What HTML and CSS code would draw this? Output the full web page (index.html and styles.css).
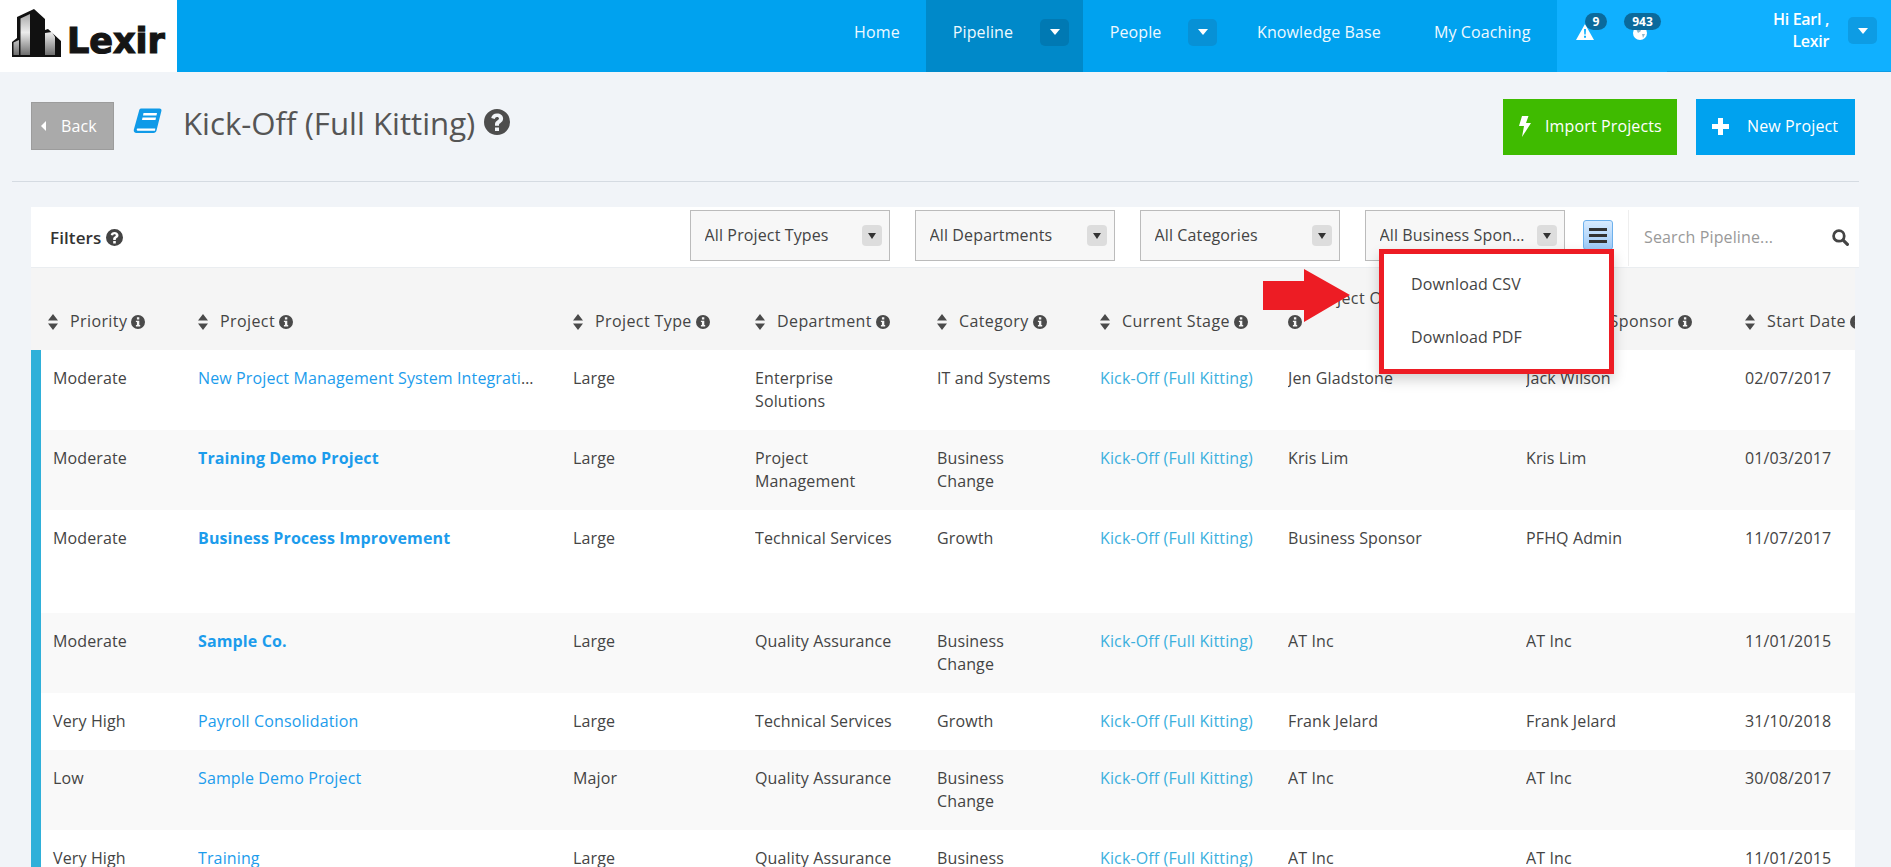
FILE: index.html
```html
<!DOCTYPE html>
<html lang="en">
<head>
<meta charset="utf-8">
<title>Kick-Off (Full Kitting)</title>
<link rel="stylesheet" href="styles.css">
</head>
<body>
<svg class="defs" width="0" height="0" aria-hidden="true">
  <symbol id="i-sort" viewBox="0 0 10 16"><path d="M5 0 10 6.500H0ZM0 9.500H10L5 16Z"/></symbol>
  <symbol id="i-info" viewBox="0 0 14 14"><path fill-rule="evenodd" d="M7 0a7 7 0 1 1 0 14A7 7 0 0 1 7 0ZM5.900 2.300V4.500H8.300V2.300ZM4.900 5.700V7H5.900V10H4.900V11.500H9.200V10H8.300V5.700Z"/></symbol>
  <symbol id="i-help" viewBox="0 0 26 26"><path fill-rule="evenodd" d="M13 0a13 13 0 1 1 0 26A13 13 0 0 1 13 0ZM11 18.500V22H15V18.500ZM13 4.500C9.700 4.500 7.700 6.300 7.200 9L10.800 9.900C11.100 8.600 11.800 7.900 13 7.900 14.200 7.900 15 8.500 15 9.500 15 10.400 14.300 10.900 13.300 11.600 12 12.500 11 13.400 11 15.200V16.800H15V15.700C15 14.900 15.600 14.500 16.500 13.900 17.900 12.900 19.100 11.800 19.100 9.500 19.100 6.500 16.500 4.500 13 4.500Z"/></symbol>
</svg>

<header class="topbar">
  <a class="logo">
    <svg class="logo-mark" viewBox="0 0 50 49" width="50" height="49" aria-hidden="true">
      <defs>
        <linearGradient id="glass" x1="0" y1="0" x2="0" y2="1"><stop offset="0" stop-color="#a8a8a8"/><stop offset=".45" stop-color="#ececec"/><stop offset="1" stop-color="#6e6e6e"/></linearGradient>
      </defs>
      <path fill="#111" d="M0 48V33L5 29V8L22 0 33 10V21L36 20 49 32V48Z"/>
      <path fill="url(#glass)" d="M1.500 46V33.500L7 31V46ZM8.500 46V9.500L18 5V46ZM33 46V24L40 23 43 28V46Z"/>
    </svg>
    <span class="logo-text">Lexir</span>
  </a>
  <nav class="nav">
    <a class="nav-item">Home</a>
    <a class="nav-item nav-item-open">Pipeline<span class="caret-box caret-dark"><i class="caret"></i></span></a>
    <a class="nav-item nav-item-drop">People<span class="caret-box"><i class="caret"></i></span></a>
    <a class="nav-item">Knowledge Base</a>
    <a class="nav-item">My Coaching</a>
  </nav>
  <div class="usernav">
    <div class="notice notice-alert">
      <svg width="18" height="16" viewBox="0 0 18 16" aria-hidden="true"><path fill="#fff" fill-rule="evenodd" d="M9 0 18 16H0ZM8 5 8.300 10.500H9.700L10 5ZM8 11.700V13.700H10V11.700Z"/></svg>
      <span class="badge badge-one">9</span>
    </div>
    <div class="notice notice-globe">
      <svg width="14" height="14" viewBox="0 0 14 14" aria-hidden="true"><circle cx="7" cy="7" r="7" fill="#fff"/><path fill="#8fb7cc" d="M3 3 7 2 8 5 5 7ZM9 8 12 8 10 12Z"/></svg>
      <span class="badge badge-many">943</span>
    </div>
    <div class="hello">Hi Earl ,<br>Lexir</div>
    <span class="caret-box caret-user"><i class="caret"></i></span>
  </div>
</header>

<main>
  <section class="titlebar">
    <a class="back"><i class="back-arrow"></i>Back</a>
    <svg class="book" width="29" height="27" viewBox="0 0 29 27" aria-hidden="true">
      <path fill="#0f9ae8" d="M8 .5H26.500C28 .5 28.800 1.500 28.400 3L23.500 22.500C23.200 24 22 25 20.500 25H3.500C1.500 25 .4 23.500 .8 21.700L6 3C6.300 1.500 6.800.5 8 .5Z"/>
      <path fill="#fff" d="M10.500 5H24L23.500 7.500H10ZM9.500 9.500H23L22.500 12H9ZM4.500 20.500H22.300L22 22.700H4.500C3.500 22.700 3.500 20.500 4.500 20.500Z"/>
    </svg>
    <h1 class="page-title">Kick-Off (Full Kitting)</h1>
    <svg class="title-help"><use href="#i-help"/></svg>
    <div class="actions">
      <a class="action action-import">
        <svg width="12" height="21" viewBox="0 0 12 21" aria-hidden="true"><path fill="#fff" d="M3 0H9.500L7 7H12L3 21 5 10H0Z"/></svg>
        Import Projects
      </a>
      <a class="action action-new">
        <svg width="17" height="17" viewBox="0 0 17 17" aria-hidden="true"><path fill="#fff" d="M6 0H11V6H17V11H11V17H6V11H0V6H6Z"/></svg>
        New Project
      </a>
    </div>
  </section>

  <section class="panel">
    <div class="filters">
      <span class="filters-label">Filters</span>
      <svg class="filters-help"><use href="#i-help"/></svg>
      <div class="selects">
        <div class="select"><span class="select-text">All Project Types</span><span class="select-caret"></span></div>
        <div class="select"><span class="select-text">All Departments</span><span class="select-caret"></span></div>
        <div class="select"><span class="select-text">All Categories</span><span class="select-caret"></span></div>
        <div class="select"><span class="select-text">All Business Sponsors</span><span class="select-caret"></span></div>
      </div>
      <button class="menu-btn" aria-label="Export menu"><i></i><i></i><i></i></button>
      <div class="search">
        <span class="search-text">Search Pipeline...</span>
        <svg width="17" height="17" viewBox="0 0 16 16" aria-hidden="true"><circle cx="6.500" cy="6.500" r="5" fill="none" stroke="#444" stroke-width="2.600"/><path d="M10.500 10.500 14.500 14.500" stroke="#444" stroke-width="3" stroke-linecap="round"/></svg>
      </div>
    </div>

    <div class="table-wrap">
      <table class="grid">
        <colgroup>
          <col class="c-bar"><col class="c-priority"><col class="c-project"><col class="c-type"><col class="c-dept"><col class="c-cat"><col class="c-stage"><col class="c-owner"><col class="c-sponsor"><col class="c-start">
        </colgroup>
        <thead>
          <tr>
            <th></th>
            <th class="first"><svg class="sort"><use href="#i-sort"/></svg>Priority<svg class="info"><use href="#i-info"/></svg></th>
            <th><svg class="sort"><use href="#i-sort"/></svg>Project<svg class="info"><use href="#i-info"/></svg></th>
            <th><svg class="sort"><use href="#i-sort"/></svg>Project Type<svg class="info"><use href="#i-info"/></svg></th>
            <th><svg class="sort"><use href="#i-sort"/></svg>Department<svg class="info"><use href="#i-info"/></svg></th>
            <th><svg class="sort"><use href="#i-sort"/></svg>Category<svg class="info"><use href="#i-info"/></svg></th>
            <th><svg class="sort"><use href="#i-sort"/></svg>Current Stage<svg class="info"><use href="#i-info"/></svg></th>
            <th><svg class="sort"><use href="#i-sort"/></svg>Project Owner<br><svg class="info info-wrapped"><use href="#i-info"/></svg></th>
            <th><svg class="sort sort-tight"><use href="#i-sort"/></svg>Business Sponsor<svg class="info"><use href="#i-info"/></svg></th>
            <th><svg class="sort"><use href="#i-sort"/></svg>Start Date<svg class="info"><use href="#i-info"/></svg></th>
          </tr>
        </thead>
        <tbody>
          <tr>
            <td class="bar"></td><td class="first">Moderate</td><td class="name"><a class="link">New Project Management System Integration</a></td><td>Large</td><td>Enterprise<br>Solutions</td><td>IT and Systems</td><td><a class="stage">Kick-Off (Full Kitting)</a></td><td>Jen Gladstone</td><td>Jack Wilson</td><td>02/07/2017</td>
          </tr>
          <tr>
            <td class="bar"></td><td class="first">Moderate</td><td class="name"><a class="link link-strong">Training Demo Project</a></td><td>Large</td><td>Project<br>Management</td><td>Business<br>Change</td><td><a class="stage">Kick-Off (Full Kitting)</a></td><td>Kris Lim</td><td>Kris Lim</td><td>01/03/2017</td>
          </tr>
          <tr class="tall">
            <td class="bar"></td><td class="first">Moderate</td><td class="name"><a class="link link-strong">Business Process Improvement</a></td><td>Large</td><td>Technical Services</td><td>Growth</td><td><a class="stage">Kick-Off (Full Kitting)</a></td><td>Business Sponsor</td><td>PFHQ Admin</td><td>11/07/2017</td>
          </tr>
          <tr>
            <td class="bar"></td><td class="first">Moderate</td><td class="name"><a class="link link-strong">Sample Co.</a></td><td>Large</td><td>Quality Assurance</td><td>Business<br>Change</td><td><a class="stage">Kick-Off (Full Kitting)</a></td><td>AT Inc</td><td>AT Inc</td><td>11/01/2015</td>
          </tr>
          <tr>
            <td class="bar"></td><td class="first">Very High</td><td class="name"><a class="link">Payroll Consolidation</a></td><td>Large</td><td>Technical Services</td><td>Growth</td><td><a class="stage">Kick-Off (Full Kitting)</a></td><td>Frank Jelard</td><td>Frank Jelard</td><td>31/10/2018</td>
          </tr>
          <tr>
            <td class="bar"></td><td class="first">Low</td><td class="name"><a class="link">Sample Demo Project</a></td><td>Major</td><td>Quality Assurance</td><td>Business<br>Change</td><td><a class="stage">Kick-Off (Full Kitting)</a></td><td>AT Inc</td><td>AT Inc</td><td>30/08/2017</td>
          </tr>
          <tr>
            <td class="bar"></td><td class="first">Very High</td><td class="name"><a class="link">Training</a></td><td>Large</td><td>Quality Assurance</td><td>Business<br>Change</td><td><a class="stage">Kick-Off (Full Kitting)</a></td><td>AT Inc</td><td>AT Inc</td><td>11/01/2015</td>
          </tr>
        </tbody>
      </table>
    </div>

    <div class="export-menu">
      <a class="export-item">Download CSV</a>
      <a class="export-item">Download PDF</a>
    </div>
    <svg class="callout-arrow" width="87" height="53" viewBox="0 0 87 53" aria-hidden="true"><path fill="#ed1c24" d="M0 12H41V0L87 26 41 53V41H0Z"/></svg>
  </section>
</main>
</body>
</html>
```

FILE: styles.css
```css
* { box-sizing: border-box; }
html, body { height: 867px; overflow: hidden; }
body {
  margin: 0;
  background: #f1f4f8;
  color: #444;
  font-family: "Open Sans", "Liberation Sans", sans-serif;
  font-size: 16px;
  line-height: 23px;
  letter-spacing: .13px;
}
a { color: inherit; text-decoration: none; }
.defs { position: absolute; }

/* top bar */
.topbar { display: flex; height: 72px; background: #00a2ef; }
.logo {
  display: flex;
  align-items: flex-end;
  width: 177px;
  padding: 0 0 15px 12px;
  background: #fff;
}
.logo-mark { display: block; flex: none; margin-bottom: -1px; }
.logo-text {
  margin-left: 5px;
  color: #151515;
  font-family: "DejaVu Sans", sans-serif;
  font-size: 35px;
  font-weight: 700;
  line-height: 32px;
  letter-spacing: 0;
  -webkit-text-stroke: 1.2px #151515;
}
.nav { display: flex; margin-left: auto; color: #eef9ff; }
.nav-item { display: flex; align-items: center; gap: 27px; padding: 0 26.5px 8px; white-space: nowrap; }
.nav-item-open { padding-right: 14px; background: #0089c9; }
.nav-item-drop { padding-right: 13px; }
.caret-box {
  display: flex;
  flex: none;
  align-items: center;
  justify-content: center;
  width: 29px;
  height: 27px;
  border-radius: 5px;
  background: #0791d6;
}
.caret-dark { background: #0079b3; }
.caret { border-top: 6px solid #fff; border-left: 5px solid transparent; border-right: 5px solid transparent; }
.usernav {
  position: relative;
  display: flex;
  flex: none;
  align-items: center;
  width: 334px;
  padding: 0 14px 8px 0;
  background: #10b0ff;
  color: #fff;
}
.usernav::after { content: ""; position: absolute; left: 110px; right: 0; bottom: 0; height: 1px; background: #0d9ce4; }
.notice { position: relative; display: flex; }
.notice-alert { margin-left: 19px; }
.notice-globe { margin: 1px 0 0 39px; }
.badge {
  position: absolute;
  height: 17px;
  border-radius: 9px;
  background: #0a6a9c;
  color: #fff;
  font-size: 12px;
  font-weight: 700;
  line-height: 17px;
  letter-spacing: 0;
  text-align: center;
}
.badge-one { top: -11px; left: 9px; width: 22px; }
.badge-many { top: -13px; left: -9px; width: 37px; }
.hello { margin: -4px 19px 0 auto; font-weight: 600; line-height: 22px; letter-spacing: -.3px; text-align: right; }
.caret-user { margin-top: -3px; background: #0d9ce4; }

/* title row */
.titlebar {
  display: flex;
  align-items: flex-start;
  height: 110px;
  margin: 0 32px 0 12px;
  padding: 27px 4px 0 19px;
  border-bottom: 1px solid #d5dbe2;
}
.back {
  display: flex;
  align-items: center;
  width: 83px;
  height: 48px;
  margin-top: 3px;
  padding-left: 9px;
  border: 1px solid #9c9c9c;
  background: #aaa;
  color: #fff;
}
.back-arrow { margin-right: 15px; border-top: 5px solid transparent; border-bottom: 5px solid transparent; border-right: 5px solid #fff; }
.book { flex: none; margin: 9px 21px 0 19px; }
.page-title { margin: 0; padding-top: 2px; color: #555; font-size: 31.2px; font-weight: 400; line-height: 44px; letter-spacing: 0; white-space: nowrap; }
.title-help { flex: none; width: 26px; height: 26px; margin: 10px 0 0 9px; fill: #4d4d4d; }
.actions { display: flex; gap: 19px; margin-left: auto; }
.action { display: flex; align-items: center; height: 56px; padding-bottom: 2px; color: #fff; white-space: nowrap; }
.action-import { gap: 14px; width: 174px; padding-left: 16px; background: #3fbb00; }
.action-new { gap: 18px; width: 159px; padding-left: 16px; background: #00a2ef; }

/* panel */
.panel { position: relative; width: 1828px; margin: 25px 0 0 31px; }
.filters {
  display: flex;
  align-items: flex-start;
  height: 61px;
  padding: 3px 0 0 19px;
  background: #fff;
  border-bottom: 1px solid #eaedf0;
}
.filters-label { margin-top: 16px; color: #333; font-size: 17px; font-weight: 600; letter-spacing: .1px; }
.filters-help { flex: none; width: 17px; height: 17px; margin: 19px 0 0 5px; fill: #444; }
.selects { display: flex; gap: 25px; margin-left: auto; }
.select {
  display: flex;
  align-items: center;
  justify-content: space-between;
  width: 200px;
  height: 51px;
  padding: 0 7px 0 13.500px;
  background: #f7f7f7;
  border: 1px solid #bbb;
}
.select-text { overflow: hidden; max-width: 148px; margin-top: -1px; white-space: nowrap; text-overflow: ellipsis; }
.select-caret {
  display: flex;
  flex: none;
  align-items: center;
  justify-content: center;
  width: 20px;
  height: 21px;
  border-radius: 4px;
  background: #ddd;
}
.select-caret::after { content: ""; border-top: 6px solid #333; border-left: 4.5px solid transparent; border-right: 4.5px solid transparent; }
.menu-btn {
  display: flex;
  flex: none;
  flex-direction: column;
  gap: 3px;
  align-items: center;
  justify-content: center;
  width: 30px;
  height: 30px;
  margin: 10px 15px 0 18px;
  padding: 0;
  border: 1px solid #6eb1ec;
  border-radius: 3px;
  background: linear-gradient(#d8ebff, #9cc9f7);
}
.menu-btn i { width: 18px; height: 3px; background: #333; }
.search {
  display: flex;
  flex: none;
  align-items: center;
  justify-content: space-between;
  width: 231px;
  height: 56px;
  padding: 0 10px 2px 15px;
  border-left: 1px solid #eee;
  color: #999;
}
.search-text { white-space: nowrap; }

/* table */
.table-wrap { overflow: hidden; width: 1824px; }
.grid { width: 1864px; border-collapse: separate; border-spacing: 0; table-layout: fixed; }
.c-bar { width: 10px; }
.c-priority { width: 157px; }
.c-project { width: 375px; }
.c-type, .c-dept { width: 182px; }
.c-cat { width: 163px; }
.c-stage { width: 188px; }
.c-owner { width: 238px; }
.c-sponsor { width: 219px; }
.c-start { width: 150px; }
.grid th {
  height: 82px;
  padding: 0 0 17px;
  background: #f5f5f5;
  color: #444;
  font-weight: 500;
  letter-spacing: .4px;
  text-align: left;
  vertical-align: bottom;
  white-space: nowrap;
}
.grid th.first { padding-left: 7px; }
.sort { width: 10px; height: 16px; margin-right: 12px; fill: #4a4a4a; vertical-align: -3px; }
.sort-tight { margin-right: 0; }
.info { width: 14px; height: 14px; margin-left: 4px; fill: #4a4a4a; vertical-align: -2px; }
.info-wrapped { margin-left: 0; }
.grid td {
  overflow: hidden;
  padding: 17px 12px 17px 0;
  vertical-align: top;
  white-space: nowrap;
  text-overflow: ellipsis;
}
.grid td.first { padding-left: 12px; }
.grid td.name { padding-right: 39px; }
.grid td.bar { padding: 0; background: #2fb0d9; }
.grid tbody tr:nth-child(even) td:not(.bar) { background: #f9f9f9; }
.grid tbody tr:nth-child(odd) td:not(.bar) { background: #fff; }
.grid .tall td { padding-bottom: 63px; }
.grid .tall td.bar { padding: 0; }
.link { color: #1c9cec; }
.link-strong { font-weight: 700; }
.stage { color: #3cb0de; }

/* overlays */
.export-menu {
  position: absolute;
  top: 42px;
  left: 1348px;
  display: flex;
  flex-direction: column;
  width: 235px;
  height: 125px;
  padding: 19px 0 0 27px;
  border: 5px solid #ed1c24;
  background: #fff;
  box-shadow: 0 6px 12px rgba(0, 0, 0, .18);
}
.export-item { flex: none; height: 53px; }
.callout-arrow { position: absolute; top: 62px; left: 1232px; }
```
